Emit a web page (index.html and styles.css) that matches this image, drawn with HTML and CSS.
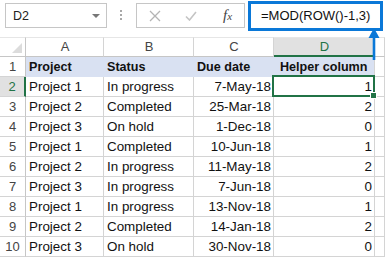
FILE: index.html
```html
<!DOCTYPE html>
<html>
<head>
<meta charset="utf-8">
<link rel="stylesheet" href="styles.css">
</head>
<body>
<div class="app">
  <div class="toolbar">
    <div class="namebox"><span>D2</span><span class="caret"></span></div>
    <div class="dots"><i></i><i></i><i></i></div>
    <div class="btnbox">
      <svg class="x" width="12" height="12" viewBox="0 0 12 12"><path d="M1 1L11 11M11 1L1 11" stroke="#b4b4b4" stroke-width="1.3" fill="none"/></svg>
      <svg class="ok" width="12" height="10" viewBox="0 0 12 10"><path d="M1 5.5L4.5 9L11 1" stroke="#c4c4c4" stroke-width="1.6" fill="none"/></svg>
      <span class="fx">f<small>x</small></span>
    </div>
    <div class="formula">=MOD(ROW()-1,3)</div>
  </div>
  <div class="sheet">
    <div class="c corner"><span class="tri"></span></div>
    <div class="c ch">A</div><div class="c ch">B</div><div class="c ch">C</div><div class="c ch sel">D</div><div class="c ch"></div>

    <div class="c rh">1</div><div class="c hd">Project</div><div class="c hd">Status</div><div class="c hd">Due date</div><div class="c hd last">Helper column</div><div class="c"></div>
    <div class="c rh sel">2</div><div class="c">Project 1</div><div class="c">In progress</div><div class="c r">7-May-18</div><div class="c r active">1<span class="handle"></span></div><div class="c"></div>
    <div class="c rh">3</div><div class="c">Project 2</div><div class="c">Completed</div><div class="c r">25-Mar-18</div><div class="c r">2</div><div class="c"></div>
    <div class="c rh">4</div><div class="c">Project 3</div><div class="c">On hold</div><div class="c r">1-Dec-18</div><div class="c r">0</div><div class="c"></div>
    <div class="c rh">5</div><div class="c">Project 1</div><div class="c">Completed</div><div class="c r">10-Jun-18</div><div class="c r">1</div><div class="c"></div>
    <div class="c rh">6</div><div class="c">Project 2</div><div class="c">In progress</div><div class="c r">11-May-18</div><div class="c r">2</div><div class="c"></div>
    <div class="c rh">7</div><div class="c">Project 3</div><div class="c">In progress</div><div class="c r">7-Jun-18</div><div class="c r">0</div><div class="c"></div>
    <div class="c rh">8</div><div class="c">Project 1</div><div class="c">In progress</div><div class="c r">13-Nov-18</div><div class="c r">1</div><div class="c"></div>
    <div class="c rh">9</div><div class="c">Project 2</div><div class="c">Completed</div><div class="c r">14-Jan-18</div><div class="c r">2</div><div class="c"></div>
    <div class="c rh">10</div><div class="c">Project 3</div><div class="c">On hold</div><div class="c r">30-Nov-18</div><div class="c r">0</div><div class="c"></div>
  </div>
  <svg class="arrow" width="14" height="34" viewBox="0 0 14 34"><path d="M7 8V33" stroke="#0a78d8" stroke-width="2.6"/><path d="M7 1L12.5 11H1.5Z" fill="#0a78d8"/></svg>
</div>
</body>
</html>
```

FILE: styles.css
```css
html, body { margin: 0; padding: 0; background: #fff; }
body { width: 385px; height: 258px; overflow: hidden; font-family: "Liberation Sans", Arial, sans-serif; }
.app { position: relative; width: 385px; height: 258px; }

.toolbar { height: 37px; display: flex; align-items: flex-start; }
.namebox { box-sizing: border-box; margin: 3px 0 0 5px; width: 102px; height: 25px; border: 1px solid #c6c6c6; display: flex; align-items: center; justify-content: space-between; padding: 0 6px 0 7px; font-size: 12.5px; color: #222; }
.caret { width: 0; height: 0; border-left: 4px solid transparent; border-right: 4px solid transparent; border-top: 4px solid #777; }
.dots { margin: 10px 0 0 13px; width: 3px; display: flex; flex-direction: column; gap: 2px; }
.dots i { display: block; width: 2px; height: 2px; background: #a8a8a8; }
.btnbox { box-sizing: border-box; margin: 3px 0 0 13px; width: 109px; height: 25px; border: 1px solid #c6c6c6; display: flex; align-items: center; padding-left: 12px; }
.btnbox .x { margin-right: 24px; }
.btnbox .ok { margin-right: 26px; }
.fx { font-family: "Liberation Serif", "Times New Roman", serif; font-style: italic; font-size: 15px; color: #444; }
.fx small { font-size: 11px; }
.formula { box-sizing: border-box; margin: 1px 0 0 3px; width: 135px; height: 30px; border: 3px solid #0a78d8; padding-left: 10px; font-size: 13px; line-height: 24px; color: #111; white-space: nowrap; }

.sheet { display: grid; grid-template-columns: 26px 78px 90px 80px 101px 1fr; grid-auto-rows: 20px; }
.c { box-sizing: border-box; border-right: 1px solid #d4d4d4; border-bottom: 1px solid #d4d4d4; padding: 0 2px 0 3px; font-size: 13.4px; line-height: 20px; color: #111; white-space: nowrap; overflow: visible; position: relative; }
.r { text-align: right; }
.corner { background: #fff; border-right-color: #c6c6c6; border-bottom-color: #c6c6c6; border-top: 1px solid #e6e6e6; }
.tri { position: absolute; right: 3px; bottom: 3px; width: 0; height: 0; border-left: 10px solid transparent; border-bottom: 10px solid #dcdcdc; }
.ch { background: #fff; text-align: center; color: #444; font-size: 13px; line-height: 18px; border-top: 1px solid #e6e6e6; border-bottom-color: #c6c6c6; }
.ch.sel { background: #e1e1e1; color: #217346; border-bottom: 2px solid #217346; line-height: 17px; }
.rh { background: #fff; text-align: center; color: #444; font-size: 13px; padding: 0; border-right-color: #c6c6c6; }
.rh.sel { background: #e1e1e1; color: #217346; border-right: 2px solid #217346; }
.hd { background: #d9e1f2; font-weight: bold; font-size: 12.6px; border-right-color: #d9e1f2; border-bottom-color: #d9e1f2; }
.hd.last { border-right-color: #d4d4d4; padding-left: 6px; }
.active::after { content: ""; position: absolute; left: -2px; top: -2px; right: -1px; bottom: -1px; border: 2px solid #217346; }
.handle { position: absolute; right: -3px; bottom: -3px; width: 5px; height: 5px; background: #217346; border: 1px solid #fff; z-index: 2; }
.arrow { position: absolute; left: 367px; top: 27px; }
```
